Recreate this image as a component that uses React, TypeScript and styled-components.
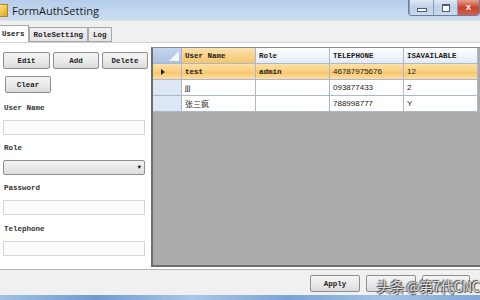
import styled, { createGlobalStyle } from 'styled-components';

const Global = createGlobalStyle`
  html, body {
    margin: 0;
    padding: 0;
    background: #f0f0f0;
  }
`;

const Window = styled.div`
  position: relative;
  width: 480px;
  height: 300px;
  overflow: hidden;
  display: flex;
  flex-direction: column;
  background: #f0f0f0;
  font-family: 'Liberation Mono', 'Noto Sans CJK SC', monospace;
`;

const TitleBar = styled.div`
  height: 20px;
  flex: none;
  display: flex;
  align-items: center;
  background: linear-gradient(180deg, #b4cde9 0%, #c3d8ef 60%, #cadcf0 100%);
  border-bottom: 1px solid #dbe6f2;
`;

const AppIcon = styled.div`
  width: 8px;
  height: 11px;
  margin: 0 4px 0 -2px;
  background: linear-gradient(135deg, #ffe680, #e0a622);
  border: 1px solid #b7861a;
`;

const Title = styled.div`
  flex: 1;
  font-family: 'Open Sans', 'Liberation Sans', sans-serif;
  font-size: 11px;
  color: #1b1b1b;
`;

const Controls = styled.div`
  align-self: flex-start;
  display: flex;
  height: 15px;
  border: 1px solid #6b7f99;
  border-top: none;
  border-radius: 0 0 4px 4px;
  overflow: hidden;
`;

const CtrlBtn = styled.div<{ $close?: boolean }>`
  width: ${(p) => (p.$close ? '21px' : '23px')};
  display: flex;
  align-items: center;
  justify-content: center;
  font-family: 'Liberation Sans', sans-serif;
  font-size: 8px;
  font-weight: 700;
  color: #fff;
  background: ${(p) =>
    p.$close
      ? 'linear-gradient(180deg, #e8a08e 0%, #c8432f 50%, #d3604a 100%)'
      : 'linear-gradient(180deg, #dfe9f5 0%, #bfd0e6 50%, #cbdaec 100%)'};
  border-left: 1px solid #8aa0bb;
`;

const MinGlyph = styled.div`
  width: 8px;
  height: 2px;
  margin-top: 4px;
  background: #fff;
  border: 1px solid #4b5d75;
`;

const MaxGlyph = styled.div`
  width: 6px;
  height: 5px;
  border: 1px solid #4b5d75;
  border-top-width: 2px;
  background: #fff;
`;

const TabStrip = styled.div`
  flex: none;
  height: 18px;
  margin-top: 3px;
  display: flex;
  align-items: flex-end;
`;

const Tab = styled.div<{ $active?: boolean }>`
  height: ${(p) => (p.$active ? '17px' : '15px')};
  padding: 0 ${(p) => (p.$active ? '3px' : '4px')};
  margin-left: ${(p) => (p.$active ? '-2px' : '0')};
  box-sizing: border-box;
  display: flex;
  align-items: center;
  font-size: 7.5px;
  font-weight: 700;
  color: #222;
  background: ${(p) => (p.$active ? '#ffffff' : 'linear-gradient(180deg, #f2f2f2, #e3e3e3)')};
  border: 1px solid #a8a8a8;
  border-bottom: ${(p) => (p.$active ? 'none' : '1px solid #a8a8a8')};
`;

const Body = styled.div`
  flex: none;
  height: 227px;
  display: flex;
  background: #ffffff;
  border-top: 1px solid #d0d0d0;
  box-sizing: border-box;
`;

const LeftPanel = styled.div`
  width: 151px;
  flex: none;
  padding: 9px 3px 0 3px;
  box-sizing: border-box;
  display: flex;
  flex-direction: column;
`;

const ButtonRow = styled.div`
  display: flex;
  gap: 3px;
`;

const Button = styled.div<{ $w: number }>`
  width: ${(p) => p.$w}px;
  height: 17px;
  box-sizing: border-box;
  display: flex;
  align-items: center;
  justify-content: center;
  font-size: 7.5px;
  font-weight: 700;
  color: #222;
  background: linear-gradient(180deg, #f4f4f4 0%, #ebebeb 50%, #dadada 100%);
  border: 1px solid #8e8e8e;
  border-radius: 2px;
`;

const ClearWrap = styled.div`
  margin: 7px 0 0 2px;
`;

const Label = styled.div<{ $top: number }>`
  margin-top: ${(p) => p.$top}px;
  margin-left: 1px;
  font-size: 7.5px;
  font-weight: 700;
  color: #333;
  height: 10px;
  line-height: 10px;
`;

const TextBox = styled.div`
  margin-top: 7px;
  width: 142px;
  height: 15px;
  box-sizing: border-box;
  border: 1px solid #d6d6d6;
  background: #fcfcfc;
`;

const Combo = styled.div`
  margin-top: 7px;
  width: 142px;
  height: 15px;
  box-sizing: border-box;
  border: 1px solid #8f8f8f;
  border-radius: 2px;
  background: linear-gradient(180deg, #f3f3f3, #dddddd);
  display: flex;
  justify-content: flex-end;
  align-items: center;
  padding-right: 3px;
  font-size: 6px;
  color: #111;
`;

const GridPanel = styled.div`
  flex: 1;
  margin: 4px 0 2px 0;
  background: #ababab;
  border-left: 2px solid #6e6e6e;
  border-bottom: 2px solid #6e6e6e;
  border-top: 1px solid #8a8a8a;
`;

const Grid = styled.div`
  display: grid;
  grid-template-columns: 29px 74px 74px 74px 74px;
  grid-auto-rows: 16px;
  width: max-content;
`;

const Cell = styled.div<{ $kind: 'head' | 'headSel' | 'corner' | 'rowHead' | 'sel' | 'plain'; $sans?: boolean }>`
  box-sizing: border-box;
  display: flex;
  align-items: center;
  padding-left: 3px;
  overflow: hidden;
  white-space: nowrap;
  font-size: ${(p) => (p.$sans ? '8px' : '7.5px')};
  font-family: ${(p) =>
    p.$sans ? "'Liberation Sans', 'Noto Sans CJK SC', sans-serif" : "'Liberation Mono', 'Noto Sans CJK SC', monospace"};
  font-weight: ${(p) => (p.$sans ? 400 : 700)};
  color: #1a1a1a;
  border-right: 1px solid #a9b8cc;
  border-bottom: 1px solid #a9b8cc;
  background: ${(p) =>
    ({
      head: 'linear-gradient(180deg, #ffffff 0%, #f1f5fb 50%, #e3ebf6 100%)',
      headSel: 'linear-gradient(180deg, #fbe3b0 0%, #f9d38b 50%, #f5c46c 100%)',
      corner: 'linear-gradient(180deg, #c5d6ee 0%, #a9c1e3 100%)',
      rowHead: '#dce6f4',
      sel: 'linear-gradient(180deg, #fde1a7 0%, #fbd185 45%, #f9c76a 55%, #fcdda4 100%)',
      plain: '#ffffff',
    })[p.$kind]};
`;

const CornerTri = styled.div`
  margin-left: auto;
  margin-right: 2px;
  width: 0;
  height: 0;
  border-left: 10px solid transparent;
  border-bottom: 10px solid #f4f7fc;
`;

const Arrow = styled.div`
  width: 0;
  height: 0;
  margin-left: 5px;
  border-top: 3px solid transparent;
  border-bottom: 3px solid transparent;
  border-left: 4px solid #222;
`;

const Footer = styled.div`
  flex: 1;
  display: flex;
  justify-content: flex-end;
  align-items: flex-start;
  gap: 6px;
  padding: 5px 10px 0 0;
  border-top: 1px solid #b5b5b5;
  background: #f0f0f0;
`;

const Taskbar = styled.div`
  flex: none;
  height: 5px;
  background: linear-gradient(90deg, #9fc0e6, #6f9bd0 20%, #a8c6ea 40%, #7aa3d4 60%, #a3c2e8 80%, #7ea6d6);
`;

const Watermark = styled.div`
  position: absolute;
  right: 0;
  bottom: 4px;
  font-family: 'Noto Sans CJK SC', sans-serif;
  font-size: 14px;
  color: rgba(255, 255, 255, 0.85);
  text-shadow: 0 0 1px #333, 1px 1px 1px #444, -1px -1px 1px #555;
  letter-spacing: -0.5px;
`;

const rows = [
  { name: 'test', role: 'admin', tel: '46787975676', avail: '12', selected: true },
  { name: 'jjj', role: '', tel: '093877433', avail: '2', selected: false },
  { name: '张三疯', role: '', tel: '788998777', avail: 'Y', selected: false },
];

export default function App() {
  return (
    <>
      <Global />
      <Window>
        <TitleBar>
          <AppIcon />
          <Title>FormAuthSetting</Title>
          <Controls>
            <CtrlBtn>
              <MinGlyph />
            </CtrlBtn>
            <CtrlBtn>
              <MaxGlyph />
            </CtrlBtn>
            <CtrlBtn $close>X</CtrlBtn>
          </Controls>
        </TitleBar>
        <TabStrip>
          <Tab $active>Users</Tab>
          <Tab>RoleSetting</Tab>
          <Tab>Log</Tab>
        </TabStrip>
        <Body>
          <LeftPanel>
            <ButtonRow>
              <Button $w={47}>Edit</Button>
              <Button $w={46}>Add</Button>
              <Button $w={46}>Delete</Button>
            </ButtonRow>
            <ClearWrap>
              <Button $w={46}>Clear</Button>
            </ClearWrap>
            <Label $top={10}>User Name</Label>
            <TextBox />
            <Label $top={8}>Role</Label>
            <Combo>▼</Combo>
            <Label $top={8}>Password</Label>
            <TextBox />
            <Label $top={9}>Telephone</Label>
            <TextBox />
          </LeftPanel>
          <GridPanel>
            <Grid>
              <Cell $kind="corner">
                <CornerTri />
              </Cell>
              <Cell $kind="headSel">User Name</Cell>
              <Cell $kind="head">Role</Cell>
              <Cell $kind="head">TELEPHONE</Cell>
              <Cell $kind="head">ISAVAILABLE</Cell>
              {rows.map((r) => {
                const k = r.selected ? 'sel' : 'plain';
                return [
                  <Cell key={r.name + 'h'} $kind={r.selected ? 'sel' : 'rowHead'}>
                    {r.selected && <Arrow />}
                  </Cell>,
                  <Cell key={r.name + 'n'} $kind={k} $sans={!r.selected}>
                    {r.name}
                  </Cell>,
                  <Cell key={r.name + 'r'} $kind={k}>
                    {r.role}
                  </Cell>,
                  <Cell key={r.name + 't'} $kind={k} $sans>
                    {r.tel}
                  </Cell>,
                  <Cell key={r.name + 'a'} $kind={k} $sans>
                    {r.avail}
                  </Cell>,
                ];
              })}
            </Grid>
          </GridPanel>
        </Body>
        <Footer>
          <Button $w={50}>Apply</Button>
          <Button $w={50} />
          <Button $w={48} />
        </Footer>
        <Taskbar />
        <Watermark>头条 @第7代CNC</Watermark>
      </Window>
    </>
  );
}
